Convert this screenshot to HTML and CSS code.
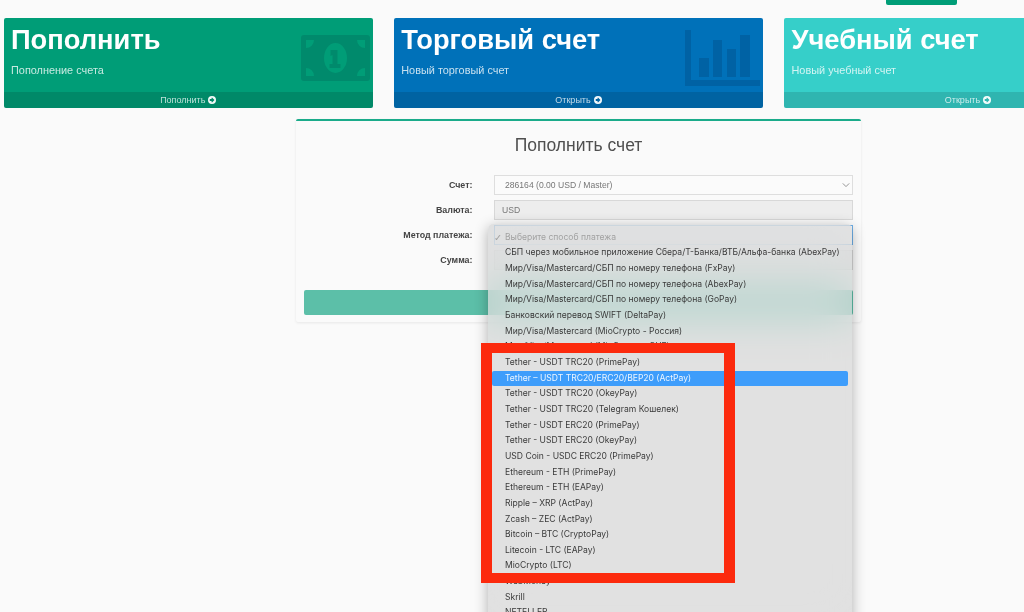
FILE: index.html
```html
<!DOCTYPE html>
<html lang="ru">
<head>
<meta charset="utf-8">
<title>Пополнить счет</title>
<link rel="stylesheet" href="styles.css">
</head>
<body>
<div class="topbar"><span class="topbtn"></span></div>
<section class="cards">
  <a class="card green">
    <div class="card-body">
      <div><h2>Пополнить</h2><p>Пополнение счета</p></div>
      <svg class="card-icon money" viewBox="0 0 69 46"><path fill-rule="evenodd" d="M3 0h63a3 3 0 0 1 3 3v40a3 3 0 0 1-3 3H3a3 3 0 0 1-3-3V3a3 3 0 0 1 3-3zM13 5H5v8a8 8 0 0 0 8-8zM56 5a8 8 0 0 0 8 8V5zM5 33v8h8a8 8 0 0 0-8-8zM64 33a8 8 0 0 0-8 8h8z"/><ellipse class="hole" cx="34.500" cy="23" rx="11.500" ry="15"/><path d="M29.500 15h7v14h3v4h-11v-4h3v-9l-2 1z"/></svg>
    </div>
    <div class="card-foot">Пополнить <svg class="arrow" viewBox="0 0 16 16"><path fill-rule="evenodd" d="M8 0a8 8 0 1 1 0 16A8 8 0 0 1 8 0zM8 3 6.500 4.500 8 6H3.500v4H8l-1.500 1.500L8 13l5-5z"/></svg></div>
  </a>
  <a class="card blue">
    <div class="card-body">
      <div><h2>Торговый счет</h2><p>Новый торговый счет</p></div>
      <svg class="card-icon chart" viewBox="0 0 75 56"><path d="M0 0h6v50h69v6H0zM14 28h10v19H14zM28 10h9v37h-9zM42 19h9v28h-9zM55 5h10v42H55z"/></svg>
    </div>
    <div class="card-foot">Открыть <svg class="arrow" viewBox="0 0 16 16"><path fill-rule="evenodd" d="M8 0a8 8 0 1 1 0 16A8 8 0 0 1 8 0zM8 3 6.500 4.500 8 6H3.500v4H8l-1.500 1.500L8 13l5-5z"/></svg></div>
  </a>
  <a class="card teal">
    <div class="card-body">
      <div><h2>Учебный счет</h2><p>Новый учебный счет</p></div>
    </div>
    <div class="card-foot">Открыть <svg class="arrow" viewBox="0 0 16 16"><path fill-rule="evenodd" d="M8 0a8 8 0 1 1 0 16A8 8 0 0 1 8 0zM8 3 6.500 4.500 8 6H3.500v4H8l-1.500 1.500L8 13l5-5z"/></svg></div>
  </a>
</section>
<main class="panel">
  <h1>Пополнить счет</h1>
  <form class="form">
    <div class="row"><label>Счет:</label><div class="field select">286164 (0.00 USD / Master)<svg class="chev" viewBox="0 0 10 6"><path d="M1 1l4 4 4-4"/></svg></div></div>
    <div class="row"><label>Валюта:</label><div class="field disabled">USD</div></div>
    <div class="row"><label>Метод платежа:</label><div class="field focus"></div></div>
    <div class="row"><label>Сумма:</label><div class="field disabled"></div></div>
    <div class="submit"></div>
  </form>
</main>
<ul class="menu">
  <li class="muted"><span class="tick">✓</span>Выберите способ платежа</li>
  <li>СБП через мобильное приложение Сбера/Т-Банка/ВТБ/Альфа-банка (AbexPay)</li>
  <li>Мир/Visa/Mastercard/СБП по номеру телефона (FxPay)</li>
  <li>Мир/Visa/Mastercard/СБП по номеру телефона (AbexPay)</li>
  <li>Мир/Visa/Mastercard/СБП по номеру телефона (GoPay)</li>
  <li>Банковский перевод SWIFT (DeltaPay)</li>
  <li>Мир/Visa/Mastercard (MioCrypto - Россия)</li>
  <li>Мир/Visa/Mastercard (MioCrypto - СНГ)</li>
  <li>Tether - USDT TRC20 (PrimePay)</li>
  <li class="active">Tether – USDT TRC20/ERC20/BEP20 (ActPay)</li>
  <li>Tether - USDT TRC20 (OkeyPay)</li>
  <li>Tether - USDT TRC20 (Telegram Кошелек)</li>
  <li>Tether - USDT ERC20 (PrimePay)</li>
  <li>Tether - USDT ERC20 (OkeyPay)</li>
  <li>USD Coin - USDC ERC20 (PrimePay)</li>
  <li>Ethereum - ETH (PrimePay)</li>
  <li>Ethereum - ETH (EAPay)</li>
  <li>Ripple – XRP (ActPay)</li>
  <li>Zcash – ZEC (ActPay)</li>
  <li>Bitcoin – BTC (CryptoPay)</li>
  <li>Litecoin - LTC (EAPay)</li>
  <li>MioCrypto (LTC)</li>
  <li>WebMoney</li>
  <li>Skrill</li>
  <li>NETELLER</li>
</ul>
<div class="redframe"></div>
</body>
</html>
```
FILE: styles.css
```css
* { box-sizing: border-box; }
html, body { height: 612px; overflow: hidden; }
body {
  margin: 0;
  background: #fafafa;
  font-family: "Liberation Sans", Arial, sans-serif;
  color: #4c4c4c;
  position: relative;
}
.topbar { height: 18px; display: flex; justify-content: flex-end; padding-right: 67px; }
.topbtn { width: 71px; height: 5px; background: #009d77; border-radius: 0 0 2px 2px; }

.cards { display: flex; gap: 20.750px; padding-left: 3.500px; width: 1100px; }
.card { width: 369.500px; height: 90px; border-radius: 2px; display: flex; flex-direction: column; color: #fff; overflow: hidden; }
.card.teal { width: 300px; }
.green { background: #009d77; }
.blue { background: #0071b9; }
.teal { background: #36cfc9; }
.card-body { flex: 1; display: flex; justify-content: space-between; padding: 7px 3px 0 7.500px; }
.card h2 { margin: 0; font-size: 27.300px; line-height: 30px; font-weight: 700; }
.card p { margin: 8px 0 0; font-size: 10.900px; line-height: 14px; opacity: .78; }
.card-icon { flex: none; }
.card-icon.money { width: 69px; height: 46px; margin-top: 10px; fill: #008a6c; }
.card-icon .hole { fill: #009d77; }
.card-icon.chart { width: 75px; height: 56px; margin-top: 5px; fill: #005f9f; opacity: .8; }
.card-foot { height: 16px; padding-bottom: 1px; display: flex; align-items: center; justify-content: center; gap: 3px; font-size: 9px; background: rgba(0, 0, 0, .12); color: rgba(255, 255, 255, .75); }
.card.teal .card-foot { padding-left: 68px; }
.arrow { width: 8px; height: 8px; fill: #fff; opacity: .95; }

.panel {
  width: 565px;
  height: 203px;
  margin: 11px 0 0 296px;
  background: #fafafa;
  border-top: 2px solid #1aab8a;
  border-radius: 2px;
  box-shadow: 0 1px 3px rgba(0, 0, 0, .08);
  padding: 0 8px;
}
.panel h1 { margin: 0; padding-top: 14px; font-size: 17.500px; line-height: 20px; font-weight: 400; text-align: center; color: #4f4f4f; }
.form { margin-top: 20px; display: flex; flex-direction: column; gap: 5px; }
.row { display: grid; grid-template-columns: 168px 359px; column-gap: 22px; align-items: center; }
.row label { text-align: right; font-size: 8.900px; font-weight: 700; color: #444; transform: translateX(.5px); }
.field { height: 20px; border: 1px solid #dedede; font-size: 8.600px; line-height: 18px; padding: 0 7px; color: #777; background: #fbfbfb; position: relative; }
.field.select { padding-left: 10px; }
.field.disabled { background: #ededed; border-color: #d8d8d8; }
.field.focus { border-color: #6fb0e8; background: #fff; }
.chev { position: absolute; right: 2px; top: 6px; width: 8px; height: 6px; fill: none; stroke: #888; stroke-width: 1.100; }
.submit { height: 25px; margin-top: 15px; background: #5cbfa8; border-radius: 2px; }

.menu {
  position: absolute;
  left: 488px;
  top: 224px;
  width: 364px;
  height: 420px;
  margin: 0;
  padding: 5.700px 4px 0 4px;
  list-style: none;
  background: rgba(214, 214, 214, .7);
  -webkit-backdrop-filter: blur(20px) saturate(1.4);
  backdrop-filter: blur(20px) saturate(1.4);
  border-radius: 5px;
  box-shadow: 0 3px 14px rgba(0, 0, 0, .3);
  font-family: Inter, "Liberation Sans", sans-serif;
  font-size: 8.550px;
  color: #3a3a3a;
}
.menu li { height: 15.670px; line-height: 15.670px; padding-left: 13px; border-radius: 2px; white-space: nowrap; position: relative; }
.menu .muted { color: #a2a2a2; }
.menu .tick { position: absolute; left: 2px; font-size: 9.500px; font-family: "DejaVu Sans", sans-serif; }
.menu .active { background: #3e9dfb; color: #eef6ff; }
.redframe {
  position: absolute;
  left: 481px;
  top: 343px;
  width: 254px;
  height: 240px;
  border: solid #fc2a0d;
  border-width: 10px 11px;
}
```
